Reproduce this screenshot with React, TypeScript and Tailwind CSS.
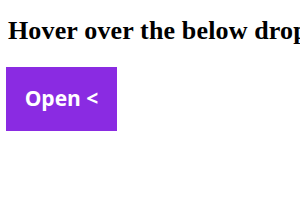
export default function App() {
  return (
    <div className="bg-white h-[210px] w-[300px] overflow-hidden px-2">
      <h3 className="pt-[17px] text-[26px] leading-[28px] font-bold whitespace-nowrap text-black tracking-[0.15px]" style={{ fontFamily: '"Liberation Serif", serif' }}>
        Hover over the below dropdown
      </h3>
      <div className="mt-[22px] -ml-[2px]">
        <button className="w-[111px] h-[64px] bg-[#8a2be2] text-white font-bold text-[21px]" style={{ fontFamily: '"Open Sans", sans-serif' }}>
          Open &lt;
        </button>
      </div>
    </div>
  );
}
